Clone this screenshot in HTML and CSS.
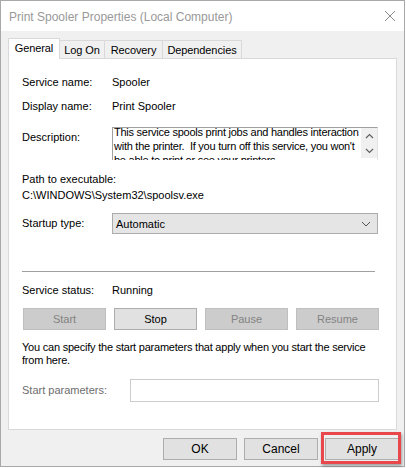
FILE: index.html
```html
<!DOCTYPE html>
<html>
<head>
<meta charset="utf-8">
<link rel="stylesheet" href="styles.css">
</head>
<body>
<div class="window">
  <div class="titlebar">
    <span class="title">Print Spooler Properties (Local Computer)</span>
    <svg class="close" width="12" height="12" viewBox="0 0 12 12"><path d="M1 1 L11 11 M11 1 L1 11" stroke="#8a8a8a" stroke-width="1" fill="none"/></svg>
  </div>
  <div class="client">
    <div class="tabs">
      <div class="tab active w-general">General</div>
      <div class="tab w-logon">Log On</div>
      <div class="tab w-recovery">Recovery</div>
      <div class="tab w-deps">Dependencies</div>
    </div>
    <div class="panel">
      <div class="row first"><span class="label">Service name:</span><span>Spooler</span></div>
      <div class="row r-display"><span class="label">Display name:</span><span>Print Spooler</span></div>
      <div class="row r-desc">
        <span class="label desc-label">Description:</span>
        <div class="textbox">
          <div class="textbox-text">This service spools print jobs and handles interaction<br>with the printer.&nbsp; If you turn off this service, you won't<br>be able to print or see your printers.</div>
          <div class="scrollbar">
            <svg width="9" height="6" viewBox="0 0 9 6"><path d="M1 5 L4.5 1.5 L8 5" stroke="#606060" stroke-width="1.2" fill="none"/></svg>
            <svg width="9" height="6" viewBox="0 0 9 6"><path d="M1 1 L4.5 4.5 L8 1" stroke="#606060" stroke-width="1.2" fill="none"/></svg>
          </div>
        </div>
      </div>
      <div class="row r-path">Path to executable:</div>
      <div class="row r-pathval">C:\WINDOWS\System32\spoolsv.exe</div>
      <div class="row r-startup">
        <span class="label startup-label">Startup type:</span>
        <div class="select">
          <span>Automatic</span>
          <svg width="10" height="6" viewBox="0 0 10 6"><path d="M1 1 L5 5 L9 1" stroke="#555" stroke-width="1" fill="none"/></svg>
        </div>
      </div>
      <div class="separator"></div>
      <div class="row r-status"><span class="label">Service status:</span><span>Running</span></div>
      <div class="btnrow">
        <div class="btn disabled">Start</div>
        <div class="btn">Stop</div>
        <div class="btn disabled">Pause</div>
        <div class="btn disabled">Resume</div>
      </div>
      <div class="hint">You can specify the start parameters that apply when you start the service<br>from here.</div>
      <div class="row r-params">
        <span class="label params-label">Start parameters:</span>
        <div class="input"></div>
      </div>
    </div>
    <div class="footer">
      <div class="btn fbtn">OK</div>
      <div class="btn fbtn">Cancel</div>
      <div class="btn fbtn apply">Apply</div>
    </div>
  </div>
</div>
</body>
</html>
```

FILE: styles.css
```css
html, body {
  margin: 0;
  padding: 0;
  background: #ffffff;
}
body {
  width: 406px;
  height: 468px;
  overflow: hidden;
  font-family: "Liberation Sans", Arial, sans-serif;
  font-size: 11px;
  color: #000;
}
.window {
  box-sizing: border-box;
  width: 405px;
  height: 467px;
  border: 1px solid #a8a8a8;
  background: #f0f0f0;
  display: flex;
  flex-direction: column;
}
.titlebar {
  height: 30px;
  flex: none;
  background: #fff;
  display: flex;
  align-items: center;
  padding-left: 8px;
  padding-right: 8px;
}
.title {
  font-size: 12px;
  letter-spacing: 0;
  color: #999;
  flex: 1;
  padding-top: 1px;
}
.client {
  flex: 1;
  display: flex;
  flex-direction: column;
}
.tabs {
  display: flex;
  align-items: flex-end;
  margin-left: 7px;
  padding-top: 7px;
  height: 20px;
}
.tab {
  box-sizing: border-box;
  height: 18px;
  border: 1px solid #d9d9d9;
  border-bottom: none;
  margin-left: -1px;
  background: #f0f0f0;
  text-align: center;
  line-height: 18px;
  font-size: 11px;
  letter-spacing: -0.1px;
}
.tab.active {
  position: relative;
  z-index: 2;
  height: 21px;
  margin-bottom: -1px;
  margin-left: 0;
  background: #fff;
  line-height: 18px;
}
.w-general { width: 52px; }
.w-logon { width: 46px; }
.w-recovery { width: 59px; }
.w-deps { width: 80px; }
.panel {
  box-sizing: border-box;
  height: 372px;
  margin: 0 7px;
  border: 1px solid #d9d9d9;
  background: #fff;
  padding: 16px 0 0 13px;
  position: relative;
  z-index: 1;
}
.row {
  display: flex;
  line-height: 14px;
}
.label {
  width: 90px;
  flex: none;
}
.r-display { margin-top: 10px; }
.r-desc {
  margin-top: 14px;
  align-items: flex-start;
}
.desc-label { padding-top: 3px; }
.textbox {
  box-sizing: border-box;
  width: 266px;
  height: 33px;
  border-top: 1px solid #a0a0a0;
  border-left: 1px solid #a0a0a0;
  border-right: 1px solid #e3e3e3;
  overflow: hidden;
  display: flex;
}
.textbox-text {
  flex: 1;
  min-width: 0;
  overflow: hidden;
  white-space: nowrap;
  margin-top: -3px;
  padding-left: 1px;
  line-height: 14px;
  letter-spacing: -0.25px;
}
.scrollbar {
  width: 16px;
  height: 30px;
  flex: none;
  background: #f0f0f0;
  display: flex;
  flex-direction: column;
  align-items: center;
  justify-content: space-between;
  padding: 5px 0 4px;
  box-sizing: border-box;
}
.scrollbar svg { display: block; }
.r-path { margin-top: 12px; }
.r-pathval { margin-top: 2px; }
.r-startup {
  margin-top: 11px;
  align-items: flex-start;
}
.startup-label { padding-top: 3px; }
.select {
  box-sizing: border-box;
  width: 266px;
  height: 21px;
  border: 1px solid #acacac;
  background: #e5e5e5;
  display: flex;
  align-items: center;
  justify-content: space-between;
  padding: 0 6px 0 3px;
}
.separator {
  width: 353px;
  height: 1px;
  background: #a0a0a0;
  margin-top: 37px;
}
.r-status { margin-top: 11px; }
.btnrow {
  display: flex;
  gap: 8px;
  margin-top: 11px;
  margin-left: 1px;
}
.btn {
  box-sizing: border-box;
  width: 83px;
  height: 22px;
  border: 1px solid #adadad;
  background: #e1e1e1;
  text-align: center;
  line-height: 20px;
}
.btn.disabled {
  background: #cccccc;
  border-color: #bfbfbf;
  color: #838383;
}
.hint {
  margin-top: 11px;
  white-space: nowrap;
  line-height: 13px;
  letter-spacing: -0.22px;
}
.r-params {
  margin-top: 12px;
  align-items: flex-start;
}
.params-label {
  width: 108px;
  padding-top: 4px;
  color: #6d6d6d;
}
.input {
  box-sizing: border-box;
  width: 249px;
  height: 23px;
  border: 1px solid #cccccc;
  background: #fff;
}
.footer {
  display: flex;
  justify-content: flex-end;
  gap: 7px;
  padding: 8px 5px 0 0;
}
.fbtn {
  width: 74px;
  font-size: 12px;
}
.apply {
  position: relative;
}
.apply::after {
  content: "";
  position: absolute;
  left: -5px;
  top: -7px;
  width: 74px;
  height: 26px;
  border: 3px solid #e8474c;
  box-shadow: 1px 2px 3px rgba(0,0,0,0.35);
}
```
